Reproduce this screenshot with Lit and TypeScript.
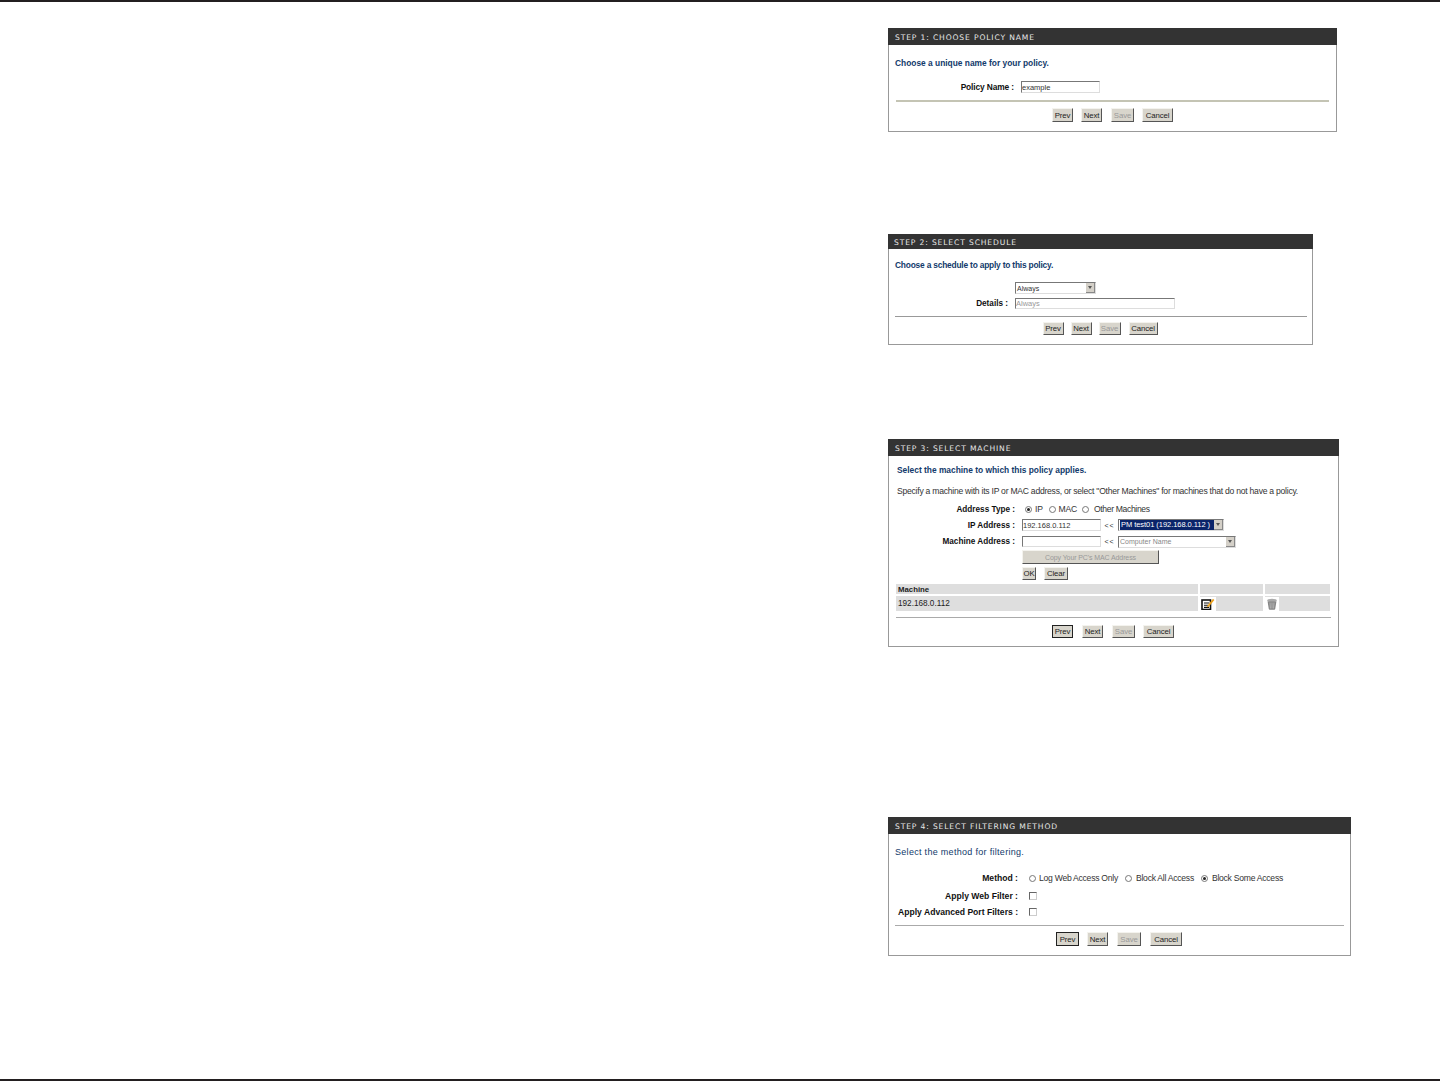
import { LitElement, html, css, svg } from "lit";
import { customElement } from "lit/decorators.js";

const buttons = (prevClass = "") => html`
  <div class="buttons">
    <button class="${prevClass} prev">Prev</button>
    <button class="next">Next</button>
    <button class="save" disabled>Save</button>
    <button class="cancel">Cancel</button>
  </div>`;

const arrow = html`<span class="arrow"><svg width="4" height="3" viewBox="0 0 4 3"><path d="M0 0h4L2 3z" fill="#555"/></svg></span>`;

const editIcon = svg`<svg class="icon" width="14" height="12" viewBox="0 0 14 12">
  <rect x="1" y="2" width="8.5" height="9.5" fill="#fff" stroke="#111" stroke-width="1.6"/>
  <path d="M3 5h5M3 7.2h4M3 9.4h5" stroke="#111" stroke-width="1.1"/>
  <path d="M6.5 7.5 12 .8l1.4 1.1-5.4 6.6-2 .8z" fill="#eda21f"/>
</svg>`;

const trashIcon = svg`<svg class="icon" width="12" height="12" viewBox="0 0 12 12">
  <ellipse cx="6" cy="2.4" rx="4.8" ry="1.6" fill="#aaa"/>
  <path d="M1.6 3.4h8.8L9.2 11a1 1 0 0 1-1 .8H3.8a1 1 0 0 1-1-.8z" fill="#858585"/>
  <path d="M4 4.5l.4 6M6 4.5v6M8 4.5l-.4 6" stroke="#c8c8c8" stroke-width=".7"/>
</svg>`;

@customElement("app-root")
export class AppRoot extends LitElement {
  static styles = css`
    :host { display: block; height: 1081px; background: #fff; font-family: "Liberation Sans", Arial, sans-serif; font-size: 8.5px; color: #222; }
    .page { height: 1081px; box-sizing: border-box; border-top: 2px solid #231f20; border-bottom: 2px solid #231f20; padding-left: 888px; display: flex; flex-direction: column; align-items: flex-start; }
    .card { box-sizing: border-box; border: 1px solid #999; border-top: 0; background: #fff; display: flex; flex-direction: column; }
    .c1 { width: 449px; height: 104px; margin-top: 26px; }
    .c2 { width: 425px; height: 111px; margin-top: 102px; }
    .c3 { width: 451px; height: 208px; margin-top: 94px; }
    .c4 { width: 463px; height: 139px; margin-top: 170px; }
    h2 { margin: 0 -1px; height: 17px; line-height: 20px; padding-left: 7px; background: #333; color: #e8e8e8; font-size: 7.6px; font-weight: 400; letter-spacing: .86px; font-family: "DejaVu Sans", sans-serif; flex: none; }
    .c2 h2 { height: 15px; line-height: 18px; padding-left: 6px; }
    .body { display: flex; flex-direction: column; padding: 0 7px; }
    .title { margin: 0; color: #123a6b; font-weight: 700; font-size: 8.4px; line-height: 12px; height: 12px; }
    .title.plain { font-weight: 400; font-size: 9px; letter-spacing: .3px; }
    .para { margin: 0; line-height: 12px; height: 12px; font-size: 8.6px; letter-spacing: -.25px; color: #333; white-space: nowrap; }
    .row { display: flex; align-items: center; height: 12px; white-space: nowrap; }
    .label { text-align: right; color: #111; font-weight: 700; font-size: 8.2px; flex: none; }
    input { box-sizing: border-box; height: 12px; padding: 0; margin: 0; font: 7.5px "Liberation Sans", sans-serif; color: #333; background: #fff; border: 1px solid; border-color: #777 #ddd #ddd #777; outline: 0; }
    input:disabled { color: #999; }
    .select { box-sizing: border-box; height: 12px; display: flex; align-items: center; justify-content: space-between; border: 1px solid; border-color: #777 #ddd #ddd #777; padding-left: 1px; font-size: 7px; color: #333; background: #fff; }
    .arrow { width: 9px; height: 10px; background: #d4d0c8; border: 0 solid #888; border-width: 0 1px 1px 0; box-sizing: border-box; display: flex; align-items: center; justify-content: center; flex: none; }
    .select.dim { color: #888; }
    .selected { background: #0a246a; color: #fff; padding: 0 1px; height: 10px; line-height: 10px; flex: 1; font-size: 7.5px; letter-spacing: -.05px; overflow: hidden; }
    hr { margin: 0; border: 0; height: 1px; background: #999; flex: none; }
    .c1 hr { height: 2px; background: #c4c4b4; }
    .c3 hr, .c4 hr { background: #aaa; }
    .buttons { display: flex; justify-content: center; }
    button { box-sizing: border-box; height: 14px; padding: 0; margin: 0; font: 7.8px "Liberation Sans", sans-serif; letter-spacing: -.1px; color: #222; background: #d8d5cc; border: 1px solid; border-color: #f4f3ee #555 #555 #f4f3ee; flex: none; }
    button:disabled { color: #999; }
    button.focus { border-color: #222; }
    .c1 .prev { width: 21px; } .c1 .next { width: 21px; margin-left: 8px; } .c1 .save { width: 23px; margin-left: 9px; } .c1 .cancel { width: 31px; margin-left: 8px; }
    .c2 .prev { width: 21px; } .c2 .next { width: 21px; margin-left: 7px; } .c2 .save { width: 22px; margin-left: 7px; } .c2 .cancel { width: 29px; margin-left: 8px; }
    .c2 button, .c3 .buttons button { height: 13px; }
    .c3 .prev { width: 21px; } .c3 .next { width: 21px; margin-left: 9px; } .c3 .save { width: 23px; margin-left: 9px; } .c3 .cancel { width: 31px; margin-left: 8px; }
    .c4 .prev { width: 23px; } .c4 .next { width: 21px; margin-left: 8px; } .c4 .save { width: 24px; margin-left: 9px; } .c4 .cancel { width: 32px; margin-left: 9px; }

    .c1 .title { margin: 12px 0 0 -1px; } .c1 .row { margin-top: 12px; } .c1 .label { width: 118px; font-size: 8.4px; letter-spacing: -.12px; } .c1 input { width: 79px; margin-left: 7px; }
    .c1 hr { margin-top: 7px; } .c1 .buttons { margin-top: 6px; }

    .c2 .body { padding: 0 5px 0 6px; }
    .c2 .title { margin-top: 10px; letter-spacing: -.2px; } .c2 .r1 { margin: 11px 0 0 120px; } .c2 .r2 { margin-top: 4px; height: 11px; } .c2 .label { width: 113px; }
    .c2 .select { width: 81px; } .c2 input { width: 160px; height: 11px; margin-left: 7px; }
    .c2 hr { margin-top: 7px; } .c2 .buttons { margin: 5px 2px 0 0; }

    .c3 .title { margin: 8px 0 0 1px; } .c3 .para { margin: 9px 0 0 1px; }
    .c3 .label { width: 119px; }
    .c3 .r1 { margin-top: 6px; } .c3 .r2 { margin-top: 4px; } .c3 .r3 { margin-top: 5px; height: 11px; } 
    .c3 input { width: 79px; margin-left: 7px; }
    .c3 .r3 input { height: 11px; }
    .ll { width: 17px; text-align: center; color: #333; font-size: 7px; letter-spacing: 1px; flex: none; }
    .c3 .sel1 { width: 106px; } .c3 .sel2 { width: 118px; }
    .c3 .copy { width: 137px; margin: 3px 0 0 126px; font-size: 7px; }
    .oks { display: flex; margin: 3px 0 0 126px; }
    .c3 .ok { width: 14px; height: 13px; } .c3 .clear { width: 24px; height: 13px; margin-left: 8px; }
    .grid { margin-top: 2px; display: grid; grid-template-columns: 302px 63px 65px; column-gap: 2px; row-gap: 2px; padding: 2px 1px 1px 0; width: 435px; box-sizing: border-box; font-size: 8.2px; color: #222; }
    .grid > div { background: #dedede; display: flex; align-items: center; padding-left: 2px; }
    .grid .h { height: 10px; font-weight: 700; font-size: 7.8px; }
    .grid .d { height: 15px; }
    .grid .i { padding-left: 0; }
    .icon { display: block; background: #fff; padding: 1px; flex: none; }
    .c3 hr { margin-top: 5px; } .c3 .buttons { margin: 7px 1px 0 0; }

    .radios { display: flex; align-items: center; font-size: 8.6px; letter-spacing: -.26px; color: #333; }
    .dot { width: 7px; height: 7px; box-sizing: border-box; border: 1px solid #777; border-radius: 50%; background: #fff; flex: none; display: flex; align-items: center; justify-content: center; }
    .dot.on::after { content: ""; width: 3px; height: 3px; border-radius: 50%; background: #222; }
    .box { width: 8px; height: 8px; box-sizing: border-box; border: 1px solid; border-color: #666 #ccc #ccc #666; flex: none; }

    .c3 .radios { margin-left: 10px; }
    .c3 .radios span.t1 { margin: 0 6px 0 3px; } .c3 .radios span.t2 { margin: 0 5px 0 3px; } .c3 .radios span.t3 { margin-left: 5px; letter-spacing: -.35px; }

    .c4 .body { padding: 0 6px; }
    .c4 .title { margin-top: 12px; } .c4 .label { width: 123px; font-size: 8.6px; }
    .c4 .r1 { margin-top: 14px; } .c4 .r2 { margin-top: 6px; } .c4 .r3 { margin-top: 4px; }
    .c4 .radios { margin-left: 11px; }
    .c4 .radios span.t1 { margin: 0 7px 0 3px; } .c4 .radios span.t2 { margin: 0 7px 0 4px; } .c4 .radios span.t3 { margin-left: 4px; }
    .c4 .box { margin-left: 11px; }
    .c4 hr { margin-top: 7px; } .c4 .buttons { margin: 6px 1px 0 0; }
  `;

  render() {
    return html`
      <div class="page">
        <section class="card c1">
          <h2>STEP 1: CHOOSE POLICY NAME</h2>
          <div class="body">
            <p class="title">Choose a unique name for your policy.</p>
            <div class="row"><span class="label">Policy Name :</span><input value="example" /></div>
            <hr />
            ${buttons()}
          </div>
        </section>

        <section class="card c2">
          <h2>STEP 2: SELECT SCHEDULE</h2>
          <div class="body">
            <p class="title">Choose a schedule to apply to this policy.</p>
            <div class="row r1"><div class="select"><span>Always</span>${arrow}</div></div>
            <div class="row r2"><span class="label">Details :</span><input value="Always" disabled /></div>
            <hr />
            ${buttons()}
          </div>
        </section>

        <section class="card c3">
          <h2>STEP 3: SELECT MACHINE</h2>
          <div class="body">
            <p class="title">Select the machine to which this policy applies.</p>
            <p class="para">Specify a machine with its IP or MAC address, or select "Other Machines" for machines that do not have a policy.</p>
            <div class="row r1"><span class="label">Address Type :</span>
              <div class="radios"><i class="dot on"></i><span class="t1">IP</span><i class="dot"></i><span class="t2">MAC</span><i class="dot"></i><span class="t3">Other Machines</span></div>
            </div>
            <div class="row r2"><span class="label">IP Address :</span><input value="192.168.0.112" /><span class="ll">&lt;&lt;</span>
              <div class="select sel1"><span class="selected">PM test01 (192.168.0.112 )</span>${arrow}</div></div>
            <div class="row r3"><span class="label">Machine Address :</span><input /><span class="ll">&lt;&lt;</span>
              <div class="select sel2 dim"><span>Computer Name</span>${arrow}</div></div>
            <div><button class="copy" disabled>Copy Your PC's MAC Address</button></div>
            <div class="oks"><button class="ok">OK</button><button class="clear">Clear</button></div>
            <div class="grid">
              <div class="h">Machine</div><div class="h"></div><div class="h"></div>
              <div class="d">192.168.0.112</div><div class="d i">${editIcon}</div><div class="d i">${trashIcon}</div>
            </div>
            <hr />
            ${buttons("focus")}
          </div>
        </section>

        <section class="card c4">
          <h2>STEP 4: SELECT FILTERING METHOD</h2>
          <div class="body">
            <p class="title plain">Select the method for filtering.</p>
            <div class="row r1"><span class="label">Method :</span>
              <div class="radios"><i class="dot"></i><span class="t1">Log Web Access Only</span><i class="dot"></i><span class="t2">Block All Access</span><i class="dot on"></i><span class="t3">Block Some Access</span></div>
            </div>
            <div class="row r2"><span class="label">Apply Web Filter :</span><i class="box"></i></div>
            <div class="row r3"><span class="label">Apply Advanced Port Filters :</span><i class="box"></i></div>
            <hr />
            ${buttons("focus")}
          </div>
        </section>
      </div>
    `;
  }
}
